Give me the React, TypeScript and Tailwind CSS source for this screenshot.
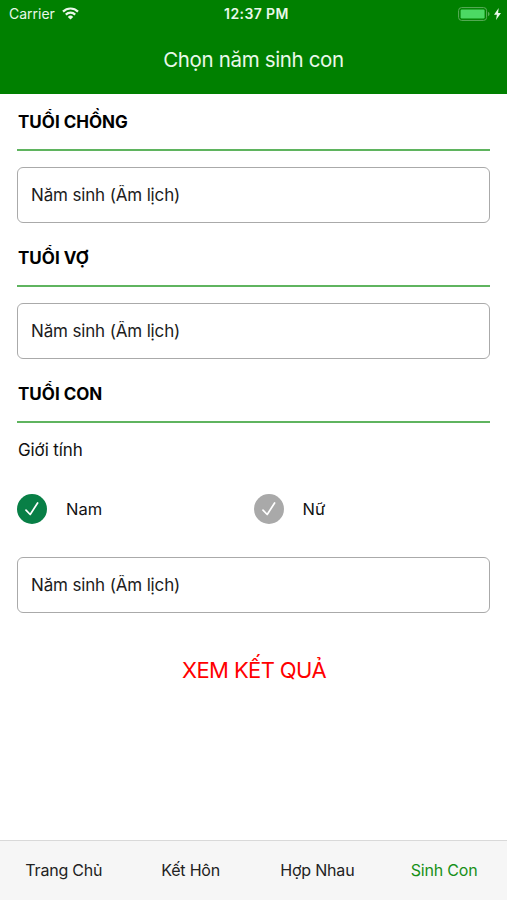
import { useState } from 'react';
import clsx from 'clsx';

const TABS = ['Trang Chủ', 'Kết Hôn', 'Hợp Nhau', 'Sinh Con'];

export default function App() {
  const [gender, setGender] = useState('Nam');
  const [tab, setTab] = useState('Sinh Con');

  return (
    <div className="flex h-[900px] w-[507px] flex-col bg-white font-['Inter',sans-serif] text-[#111]">
      {/* Header */}
      <header className="h-[94px] bg-[#008000] text-[#e9f8e9]">
        <StatusBar />
        <h1 className="pt-[18px] text-center text-[20.5px] leading-[30px] tracking-[-0.35px]">
          Chọn năm sinh con
        </h1>
      </header>

      {/* Form */}
      <main className="flex-1 px-[17px]">
        <SectionTitle title="TUỔI CHỒNG" />
        <YearInput />
        <div className="mt-[7px]">
          <SectionTitle title="TUỔI VỢ" />
        </div>
        <YearInput />
        <div className="mt-[7px]">
          <SectionTitle title="TUỔI CON" />
        </div>

        <p className="-mt-[1px] pl-px text-[17px] leading-6 tracking-[-0.1px]">Giới tính</p>
        <div className="mt-8 mb-[33px] grid grid-cols-2">
          {['Nam', 'Nữ'].map((label) => (
            <GenderOption
              key={label}
              label={label}
              isActive={gender === label}
              onSelect={() => setGender(label)}
            />
          ))}
        </div>
        <YearInput />

        <button className="mt-[41px] block w-full pl-px text-center text-[22px] leading-8 tracking-[-0.6px] text-[#ff0000]">
          XEM KẾT QUẢ
        </button>
      </main>

      {/* Bottom Tabs */}
      <nav className="grid h-[60px] grid-cols-4 border-t border-[#d9d9d9] bg-[#f6f6f6] pb-[2px]">
        {TABS.map((item) => (
          <button
            key={item}
            onClick={() => setTab(item)}
            className={clsx(
              'pl-px text-[16px] tracking-[-0.2px]',
              tab === item ? 'text-[#189018]' : 'text-[#222]'
            )}
          >
            {item}
          </button>
        ))}
      </nav>
    </div>
  );
}

function StatusBar() {
  return (
    <div className="grid h-[27px] grid-cols-3 items-center text-[14px]">
      <div className="flex items-center gap-[7px] pl-[9px]">
        <span>Carrier</span>
        <svg width="17" height="13" viewBox="0 0 17 13" fill="none" stroke="currentColor" strokeWidth="2.2">
          <path d="M1 4.6a10.6 10.6 0 0 1 15 0" />
          <path d="M3.8 7.6a6.7 6.7 0 0 1 9.4 0" />
          <path d="M8.5 12.6 5.8 9.9a3.8 3.8 0 0 1 5.4 0z" fill="currentColor" stroke="none" />
        </svg>
      </div>
      <span className="pl-[6px] text-center font-semibold tracking-[0.4px]">12:37 PM</span>
      <div className="flex items-center justify-end gap-[4px] pr-[6px]">
        <svg width="32" height="14" viewBox="0 0 32 14">
          <rect x="0.6" y="0.6" width="28" height="12.8" rx="3" fill="none" stroke="#5cae5c" />
          <rect x="2.6" y="2.5" width="24" height="9" rx="1.2" fill="#4cd964" />
          <path d="M30 4.8q1.6 0.7 1.6 2.2T30 9.2z" fill="#5cae5c" />
        </svg>
        <svg width="7" height="12" viewBox="0 0 7 12" fill="currentColor">
          <path d="M4.7 0 0 6.7h2.9L2 12l5-7H4.1z" />
        </svg>
      </div>
    </div>
  );
}

function SectionTitle({ title }: { title: string }) {
  return (
    <h2 className="mb-4 h-[57px] border-b-2 border-[#5fb45f] pt-[16px] pl-px text-[17px] leading-6 font-bold text-black">
      {title}
    </h2>
  );
}

function YearInput() {
  return (
    <input
      className="block h-14 w-full rounded-md border border-[#aaa] px-[13px] text-[17px] tracking-[-0.15px] outline-none placeholder:text-[#1c1c1c]"
      placeholder="Năm sinh (Âm lịch)"
    />
  );
}

function GenderOption({
  label,
  isActive,
  onSelect,
}: {
  label: string;
  isActive: boolean;
  onSelect: () => void;
}) {
  return (
    <button onClick={onSelect} className="flex items-center gap-[19px] text-[16.5px]">
      <svg width="30" height="30" viewBox="0 0 30 30" fill="none">
        <circle cx="15" cy="15" r="15" className={isActive ? 'fill-[#087f46]' : 'fill-[#a9a9a9]'} />
        <path
          d="m9 16.2 4.2 4.3 7.4-11.5"
          stroke="#fff"
          strokeWidth="1.7"
          strokeLinecap="round"
          strokeLinejoin="round"
        />
      </svg>
      {label}
    </button>
  );
}
